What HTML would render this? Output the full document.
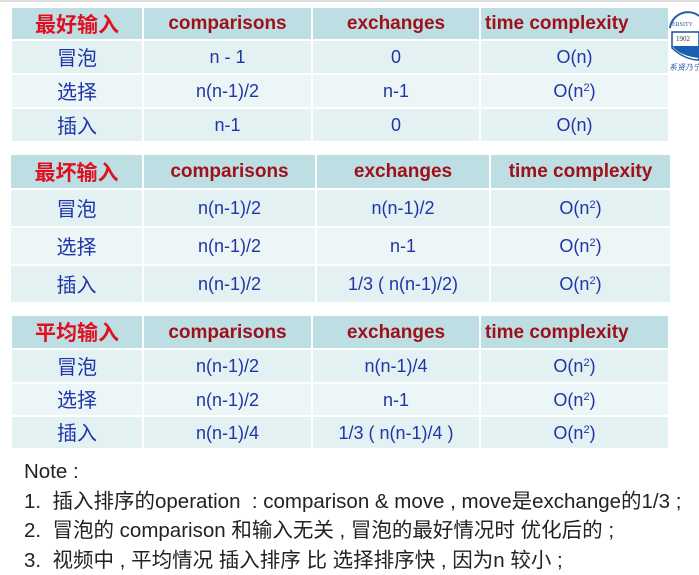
<!DOCTYPE html><html><head><meta charset="utf-8"><style>
body{margin:0;width:699px;height:571px;background:#fff;position:relative;overflow:hidden;font-family:"Liberation Sans","Noto Sans CJK SC",sans-serif}
.t{position:absolute;border-collapse:separate;border-spacing:2px;table-layout:fixed}
.t td{text-align:center;padding:0;color:#1f35a8;font-size:18px;background:#e3f1f3;line-height:1;vertical-align:middle}
.t td:first-child{font-size:20px;padding-top:3px}
.t tr.h td{background:#bddfe3;color:#a0101a;font-weight:bold;font-size:19px}
.t tr.h td:first-child{color:#e01020;font-size:21px}
.t tr:nth-child(3) td{background:#edf6f7}
sup{font-size:11px;vertical-align:6px;line-height:0}
.logo{position:absolute;left:668px;top:10px}
.n{position:absolute;left:24px;top:457px;font-size:20.5px;color:#222;line-height:29.5px;font-family:"Liberation Sans","Noto Sans CJK SC",sans-serif}
</style></head><body>
<div style="position:absolute;left:0;top:0;width:699px;height:2px;background:#ddd"></div>
<table class="t" style="left:10px;top:6px;width:660px">
<colgroup><col style="width:130px"><col style="width:167px"><col style="width:166px"><col></colgroup>
<tr class="h" style="height:31px"><td>最好输入</td><td>comparisons</td><td>exchanges</td><td style="text-align:left;padding-left:4px">time complexity</td></tr>
<tr style="height:32px"><td>冒泡</td><td>n - 1</td><td>0</td><td>O(n)</td></tr>
<tr style="height:32px"><td>选择</td><td>n(n-1)/2</td><td>n-1</td><td>O(n<sup>2</sup>)</td></tr>
<tr style="height:32px"><td>插入</td><td>n-1</td><td>0</td><td>O(n)</td></tr>
</table>
<svg class="logo" width="31" height="64" viewBox="0 0 31 64"><path d="M31 6 A18 18 0 0 0 2 18" fill="none" stroke="#2a5aa8" stroke-width="2"/><text x="4" y="16" font-size="6" fill="#2a5aa8" font-family="Liberation Serif">ERSITY</text><path d="M4 22 h27 v28 q-14 0 -27 -12 z" fill="#fff" stroke="#1a4f9c" stroke-width="1.5"/><text x="8" y="31" font-size="7" fill="#333" font-family="Liberation Serif">1902</text><path d="M4 36 q8 10 27 12 v-12 z" fill="#1a5fb0"/><text x="1" y="60" font-size="8" fill="#2a5aa8" font-style="italic">系贤乃宁</text><rect x="1" y="70" width="30" height="3" fill="#3b7bd0"/></svg>
<table class="t" style="left:9px;top:153px;width:663px">
<colgroup><col style="width:131px"><col style="width:171px"><col style="width:172px"><col></colgroup>
<tr class="h" style="height:33px"><td>最坏输入</td><td>comparisons</td><td>exchanges</td><td>time complexity</td></tr>
<tr style="height:36px"><td>冒泡</td><td>n(n-1)/2</td><td>n(n-1)/2</td><td>O(n<sup>2</sup>)</td></tr>
<tr style="height:36px"><td>选择</td><td>n(n-1)/2</td><td>n-1</td><td>O(n<sup>2</sup>)</td></tr>
<tr style="height:36px"><td>插入</td><td>n(n-1)/2</td><td>1/3 ( n(n-1)/2)</td><td>O(n<sup>2</sup>)</td></tr>
</table>
<table class="t" style="left:10px;top:314px;width:660px">
<colgroup><col style="width:130px"><col style="width:167px"><col style="width:166px"><col></colgroup>
<tr class="h" style="height:32px"><td>平均输入</td><td>comparisons</td><td>exchanges</td><td style="text-align:left;padding-left:4px">time complexity</td></tr>
<tr style="height:32px"><td>冒泡</td><td>n(n-1)/2</td><td>n(n-1)/4</td><td>O(n<sup>2</sup>)</td></tr>
<tr style="height:31px"><td>选择</td><td>n(n-1)/2</td><td>n-1</td><td>O(n<sup>2</sup>)</td></tr>
<tr style="height:31px"><td>插入</td><td>n(n-1)/4</td><td>1/3 ( n(n-1)/4 )</td><td>O(n<sup>2</sup>)</td></tr>
</table>
<div class="n">Note :<br>1.&nbsp; 插入排序的operation&nbsp; : comparison &amp; move , move是exchange的1/3 ;<br>2.&nbsp; 冒泡的 comparison 和输入无关 , 冒泡的最好情况时 优化后的 ;<br>3.&nbsp; 视频中 , 平均情况 插入排序 比 选择排序快 , 因为n 较小 ;</div>
</body></html>
